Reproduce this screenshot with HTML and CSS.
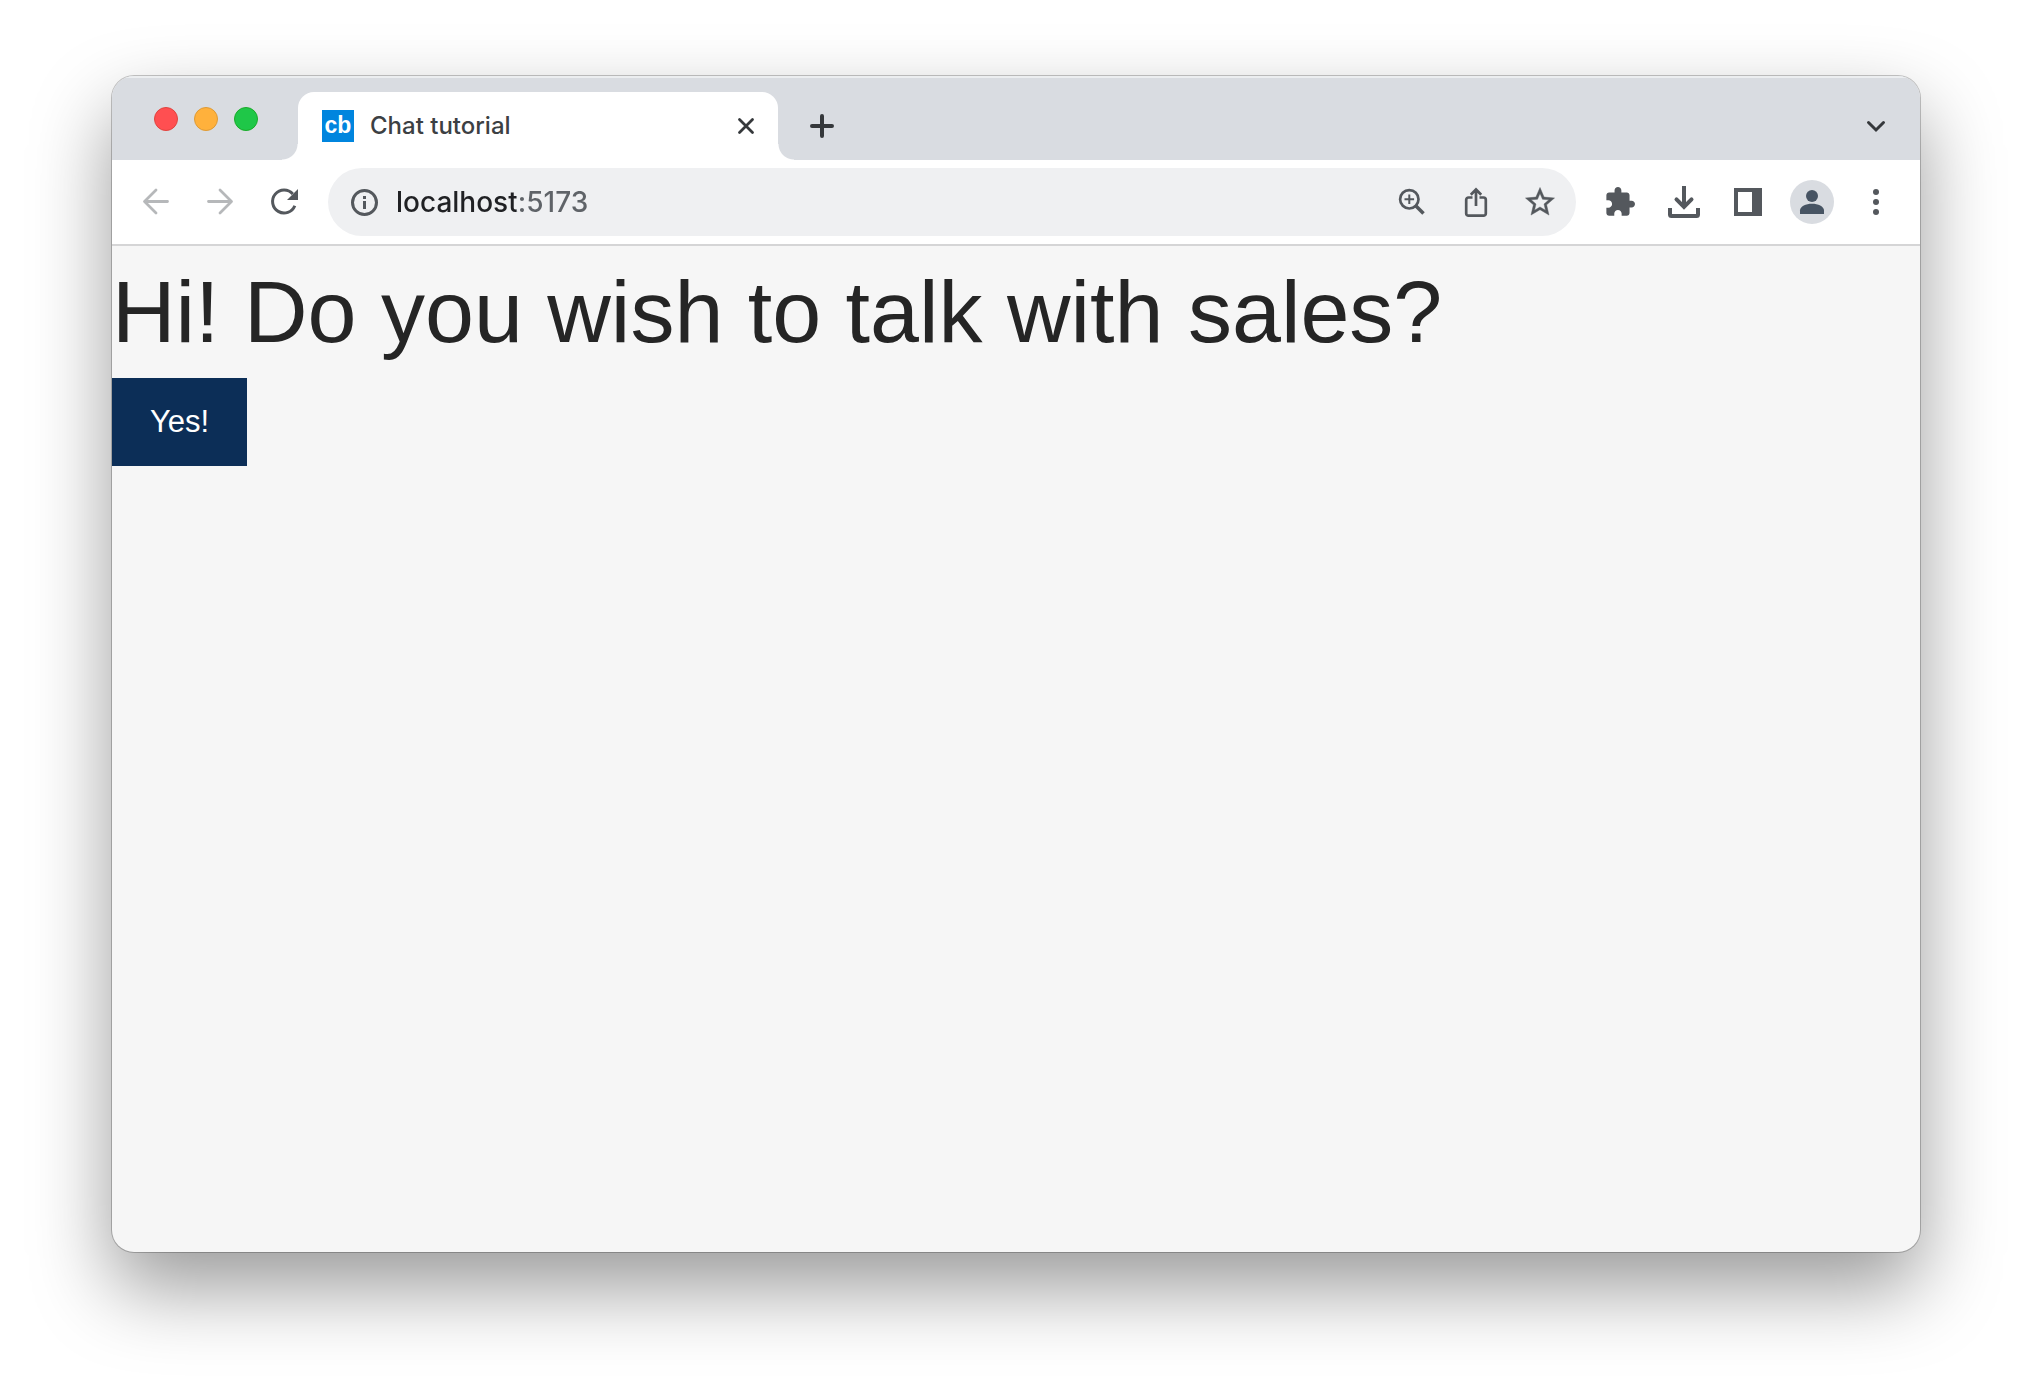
FILE: index.html
```html
<!DOCTYPE html>
<html lang="en">
<head>
<meta charset="utf-8">
<title>Chat tutorial</title>
<link rel="stylesheet" href="styles.css">
</head>
<body>
<div class="window">
  <header class="tab-strip">
    <div class="lights">
      <button class="light light-close" aria-label="Close window"></button>
      <button class="light light-minimize" aria-label="Minimize window"></button>
      <button class="light light-zoom" aria-label="Zoom window"></button>
    </div>
    <div class="tab">
      <span class="favicon">cb</span>
      <span class="tab-title">Chat tutorial</span>
      <button class="icon-button ink" aria-label="Close tab">
        <svg class="icon" viewBox="0 0 48 48"><path d="M17.500 17.500l13 13M30.500 17.500l-13 13" fill="none" stroke="currentColor" stroke-width="2.800" stroke-linecap="round"/></svg>
      </button>
    </div>
    <button class="icon-button ink new-tab" aria-label="New tab">
      <svg class="icon" viewBox="0 0 48 48"><path d="M24 14v20M14 24h20" fill="none" stroke="currentColor" stroke-width="4" stroke-linecap="round"/></svg>
    </button>
    <button class="icon-button ink tab-search" aria-label="Search tabs">
      <svg class="icon" viewBox="0 0 48 48"><path d="M16.500 20.500L24 28l7.500-7.500" fill="none" stroke="currentColor" stroke-width="3" stroke-linecap="round"/></svg>
    </button>
  </header>

  <nav class="toolbar">
    <div class="group">
      <button class="icon-button faded" aria-label="Back">
        <svg class="icon" viewBox="0 0 48 48"><path d="M35.500 23.500H13M24 12L12.500 23.500 24 35" fill="none" stroke="currentColor" stroke-width="2.800" stroke-linecap="round" stroke-linejoin="round"/></svg>
      </button>
      <button class="icon-button faded" aria-label="Forward">
        <svg class="icon" viewBox="0 0 48 48"><path d="M12.500 23.500H35M24 12l11.500 11.500L24 35" fill="none" stroke="currentColor" stroke-width="2.800" stroke-linecap="round" stroke-linejoin="round"/></svg>
      </button>
      <button class="icon-button" aria-label="Reload">
        <svg class="icon" viewBox="0 0 48 48"><path d="M34.800 27.700A11.500 11.500 0 1 1 32.800 16" fill="none" stroke="currentColor" stroke-width="3"/><path d="M38 11v11H27z" fill="currentColor"/></svg>
      </button>
    </div>

    <div class="omnibox">
      <button class="icon-button" aria-label="Site information">
        <svg class="icon" viewBox="0 0 48 48"><circle cx="24.500" cy="24.500" r="12" fill="none" stroke="currentColor" stroke-width="3"/><path d="M23 18h3v3h-3zM23 23h3v8h-3z" fill="currentColor"/></svg>
      </button>
      <input class="address" type="text" value="localhost:5173" aria-label="Address">
      <button class="icon-button" aria-label="Zoom">
        <svg class="icon" viewBox="0 0 48 48"><g fill="none" stroke="currentColor"><circle cx="21.300" cy="21.300" r="9.200" stroke-width="2.700"/><path d="M28 28l7.500 7.500" stroke-width="3.600"/><path d="M21.300 16.500v9.600M16.500 21.300h9.600" stroke-width="2"/></g></svg>
      </button>
      <button class="icon-button" aria-label="Share">
        <svg class="icon" viewBox="0 0 48 48"><path d="M20.500 19.500h-4a2.300 2.300 0 0 0-2.300 2.300v13.600a2.300 2.300 0 0 0 2.300 2.300h15a2.300 2.300 0 0 0 2.300-2.300V21.800a2.300 2.300 0 0 0-2.300-2.300h-4M24 28V12M18.800 16.800L24 11.500l5.200 5.300" fill="none" stroke="currentColor" stroke-width="2.700"/></svg>
      </button>
      <button class="icon-button" aria-label="Bookmark this tab">
        <svg class="icon" viewBox="-4.500 -4.500 33 33"><path fill="currentColor" stroke="currentColor" stroke-width=".3" d="M22 9.240l-7.190-.62L12 2 9.190 8.630 2 9.240l5.460 4.730L5.820 21 12 17.270 18.180 21l-1.630-7.030L22 9.240zM12 15.400l-3.760 2.270 1-4.280-3.320-2.880 4.380-.38L12 6.100l1.710 4.040 4.380.38-3.320 2.880 1 4.280L12 15.400z"/></svg>
      </button>
    </div>

    <div class="group">
      <button class="icon-button" aria-label="Extensions">
        <svg class="icon" viewBox="-5.600 -5.600 35.200 35.200"><path fill="currentColor" d="M20.500 11H19V7c0-1.100-.9-2-2-2h-4V3.500C13 2.120 11.880 1 10.500 1S8 2.120 8 3.500V5H4c-1.100 0-1.990.9-1.990 2v3.800H3.500c1.490 0 2.700 1.210 2.700 2.700s-1.210 2.700-2.700 2.700H2V20c0 1.100.9 2 2 2h3.800v-1.500c0-1.490 1.210-2.700 2.700-2.700 1.490 0 2.700 1.210 2.700 2.700V22H17c1.100 0 2-.9 2-2v-4h1.500c1.380 0 2.500-1.120 2.500-2.500S21.880 11 20.500 11z"/></svg>
      </button>
      <button class="icon-button" aria-label="Downloads">
        <svg class="icon" viewBox="0 0 48 48"><g fill="none" stroke="currentColor" stroke-width="4"><path d="M24 8v20"/><path d="M16.500 21.300l7.500 7.500 7.500-7.500" stroke-linecap="round"/><path d="M10 30v6.500a1.500 1.500 0 0 0 1.500 1.500h25a1.500 1.500 0 0 0 1.500-1.500V30"/></g></svg>
      </button>
      <button class="icon-button" aria-label="Side panel">
        <svg class="icon" viewBox="0 0 48 48"><path fill="currentColor" fill-rule="evenodd" d="M10 10h28v28H10zM14 14v20h14V14z"/></svg>
      </button>
      <button class="icon-button" aria-label="Profile">
        <svg class="icon" viewBox="0 0 48 48"><circle cx="24" cy="24" r="22" fill="#d9dce1"/><g fill="#475463"><circle cx="24" cy="18" r="6"/><path d="M12 36v-3.500c0-4.200 6-6.700 12-6.700s12 2.500 12 6.700V36z"/></g></svg>
      </button>
      <button class="icon-button" aria-label="Menu">
        <svg class="icon" viewBox="0 0 48 48"><g fill="currentColor"><circle cx="24" cy="14" r="3"/><circle cx="24" cy="24" r="3"/><circle cx="24" cy="34" r="3"/></g></svg>
      </button>
    </div>
  </nav>

  <main class="page">
    <h1 class="question">Hi! Do you wish to talk with sales?</h1>
    <button class="answer">Yes!</button>
  </main>
</div>
</body>
</html>
```
FILE: styles.css
```css
* {
  box-sizing: border-box;
}

body {
  display: flex;
  flex-direction: column;
  min-height: 100vh;
  margin: 0;
  padding: 76px 112px 148px;
  background: #fff;
  font-family: Inter, sans-serif;
}

button {
  margin: 0;
  padding: 0;
  border: 0;
  background: none;
  font: inherit;
}

.window {
  flex: 1;
  display: flex;
  flex-direction: column;
  overflow: hidden;
  border-radius: 22px;
  background: #f6f6f6;
  box-shadow: 0 0 0 1px rgba(0, 0, 0, 0.22), 0 36px 80px rgba(0, 0, 0, 0.4);
}

.tab-strip {
  display: flex;
  align-items: flex-end;
  height: 84px;
  padding-right: 12px;
  background: #d9dce1;
  box-shadow: inset 0 2px 0 #eceef0;
}

.lights {
  display: flex;
  align-self: center;
  gap: 16px;
  padding: 2px 40px 0 42px;
}

.light {
  width: 24px;
  height: 24px;
  border: 1px solid;
  border-radius: 50%;
}

.light-close {
  border-color: #e0443e;
  background: #ff4f51;
}

.light-minimize {
  border-color: #de9a35;
  background: #ffb13c;
}

.light-zoom {
  border-color: #1aab29;
  background: #1fc748;
}

.tab {
  position: relative;
  display: flex;
  align-items: center;
  width: 480px;
  height: 68px;
  padding-left: 24px;
  border-radius: 16px 16px 0 0;
  background: #fff;
}

.tab::before,
.tab::after {
  content: "";
  position: absolute;
  bottom: 0;
  width: 16px;
  height: 16px;
}

.tab::before {
  right: 100%;
  background: radial-gradient(circle at 0 0, transparent 15px, #fff 16px);
}

.tab::after {
  left: 100%;
  background: radial-gradient(circle at 100% 0, transparent 15px, #fff 16px);
}

.favicon {
  width: 32px;
  height: 32px;
  background: #0085de;
  color: #fff;
  font: bold 23px/30px "Liberation Sans", Arial, sans-serif;
  text-align: center;
}

.tab-title {
  flex: 1;
  padding-left: 16px;
  color: #3c4043;
  font-size: 24px;
  font-weight: 450;
  line-height: 32px;
}

.icon-button {
  display: flex;
  flex: none;
  align-items: center;
  justify-content: center;
  width: 64px;
  height: 68px;
  color: #54585d;
}

.icon {
  width: 48px;
  height: 48px;
}

.ink {
  color: #35383b;
}

.faded {
  color: #b6b8ba;
}

.new-tab {
  margin-left: 12px;
}

.tab-search {
  margin-left: auto;
}

.toolbar {
  display: flex;
  align-items: center;
  gap: 12px;
  height: 86px;
  padding: 0 12px;
  border-bottom: 2px solid #d5d5d6;
  background: #fff;
}

.group {
  display: flex;
}

.omnibox {
  flex: 1;
  display: flex;
  align-items: center;
  height: 68px;
  padding: 0 4px;
  border-radius: 34px;
  background: #eff0f2;
}

.address {
  flex: 1;
  min-width: 0;
  height: 40px;
  padding: 0;
  border: 0;
  outline: 0;
  /* host in dark ink, port in grey */
  background: linear-gradient(90deg, #202124 120px, #5f6368 120px);
  background-clip: text;
  -webkit-background-clip: text;
  -webkit-text-fill-color: transparent;
  color: #202124;
  font: 450 28px/40px Inter, sans-serif;
}

.page {
  flex: 1;
  font-family: "Liberation Sans", Arial, sans-serif;
}

.question {
  margin: 0;
  color: #252525;
  font-size: 88px;
  font-weight: 400;
  line-height: 132px;
}

.answer {
  display: block;
  height: 88px;
  padding: 0 38px;
  background: #0c2e57;
  color: #fff;
  font-size: 31px;
}
```
